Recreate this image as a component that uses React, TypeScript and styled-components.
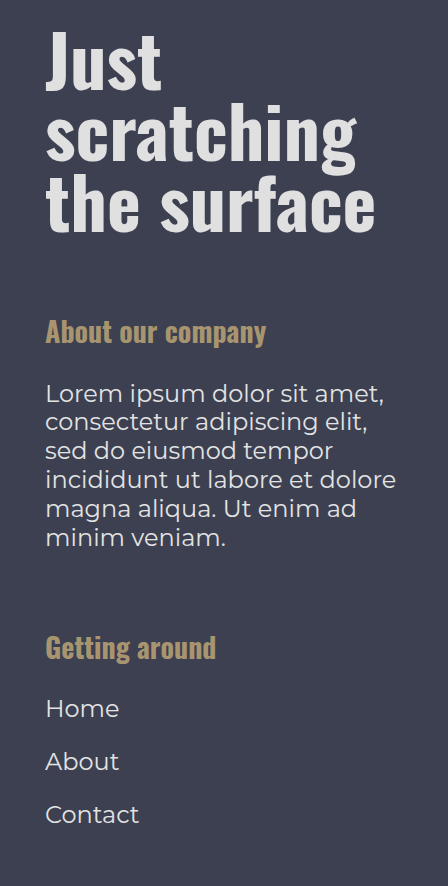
import React from "react";
import styled, { createGlobalStyle } from "styled-components";

const GlobalStyle = createGlobalStyle`
  html, body { margin: 0; padding: 0; background: #3c4051; }
  body { font-family: "Montserrat", "Liberation Sans", sans-serif; color: #e3e3e3; }
`;

const Footer = styled.footer`
  min-height: 886px;
  box-sizing: border-box;
  padding: 22px 45px 40px;
  background: #3c4051;
  display: flex;
  flex-direction: column;
`;

const Title = styled.h1`
  margin: 0;
  font-family: "Oswald", "Liberation Sans", sans-serif;
  font-weight: 700;
  font-size: 72px;
  line-height: 71px;
  color: #e0e0e0;
`;

const Section = styled.section<{ $gap: number }>`
  margin-top: ${(p) => p.$gap}px;
  display: flex;
  flex-direction: column;
`;

const SectionTitle = styled.h2`
  margin: 0;
  font-family: "Oswald", "Liberation Sans", sans-serif;
  font-weight: 700;
  font-size: 28px;
  line-height: 1.2;
  color: #a8956f;
`;

const Text = styled.p`
  margin: 32px 0 0;
  font-size: 24px;
  line-height: 1.2;
  color: #e3e3e3;
`;

const NavList = styled.ul`
  list-style: none;
  margin: 30px 0 0;
  padding: 0;
  display: flex;
  flex-direction: column;
  gap: 24px;
`;

const NavLink = styled.a`
  font-size: 24px;
  line-height: 29px;
  color: #e3e3e3;
  text-decoration: none;
`;

export default function App() {
  return (
    <Footer>
      <GlobalStyle />
      <Title>
        Just scratching the surface
      </Title>
      <Section $gap={79}>
        <SectionTitle>About our company</SectionTitle>
        <Text>
          Lorem ipsum dolor sit amet, consectetur adipiscing elit, sed do eiusmod tempor
          incididunt ut labore et dolore magna aliqua. Ut enim ad minim veniam.
        </Text>
      </Section>
      <Section $gap={78}>
        <SectionTitle>Getting around</SectionTitle>
        <NavList>
          <li><NavLink href="#">Home</NavLink></li>
          <li><NavLink href="#">About</NavLink></li>
          <li><NavLink href="#">Contact</NavLink></li>
        </NavList>
      </Section>
    </Footer>
  );
}
